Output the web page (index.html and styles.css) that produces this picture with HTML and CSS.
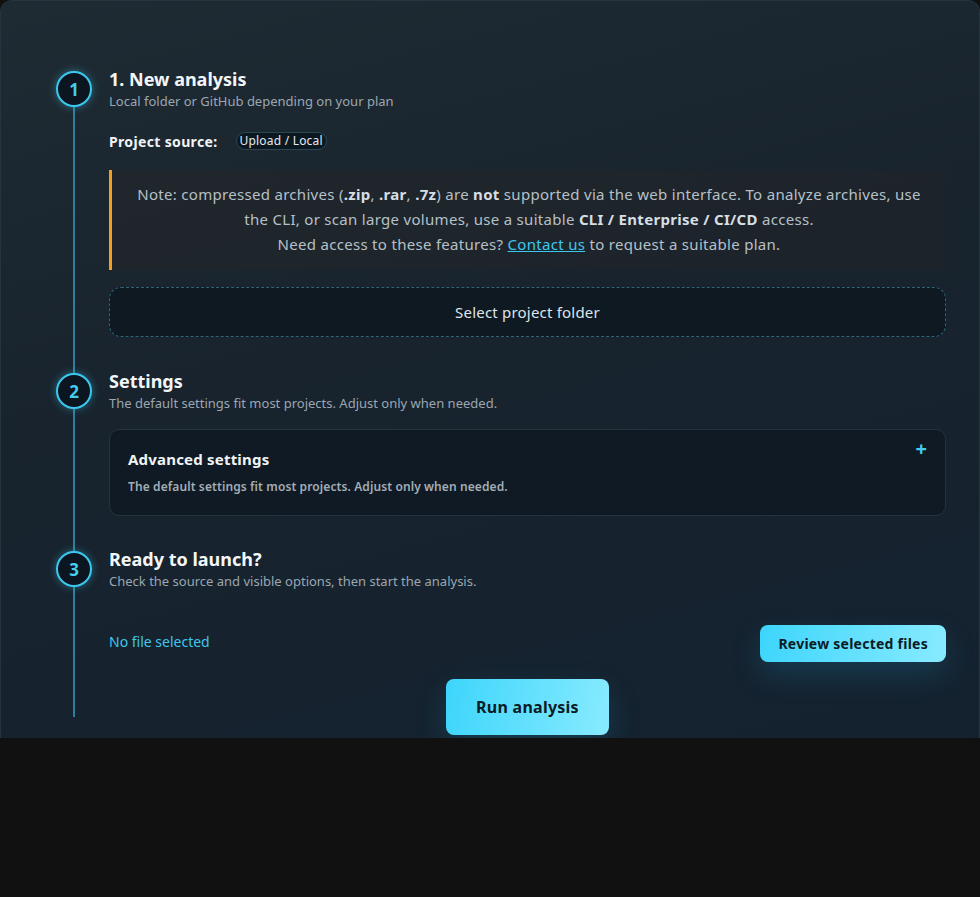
FILE: index.html
```html
<!DOCTYPE html>
<html lang="en">
<head>
<meta charset="utf-8">
<title>New analysis</title>
<link rel="stylesheet" href="styles.css">
</head>
<body>
<main class="panel">
  <ol class="steps">
    <li class="step">
      <span class="step-num">1</span>
      <div class="step-body">
        <h2 class="step-title">1. New analysis</h2>
        <p class="step-sub">Local folder or GitHub depending on your plan</p>

        <div class="source-row">
          <span class="source-label">Project source:</span>
          <span class="pill">Upload / Local</span>
        </div>

        <div class="note">
          Note: compressed archives (<b>.zip</b>, <b>.rar</b>, <b>.7z</b>) are <b>not</b> supported via the web interface. To analyze archives, use the CLI, or scan large volumes, use a suitable <b>CLI / Enterprise / CI/CD</b> access.<br>
          Need access to these features? <a href="#" class="link">Contact us</a> to request a suitable plan.
        </div>

        <button class="dropzone" type="button">Select project folder</button>
      </div>
    </li>

    <li class="step step-settings">
      <span class="step-num">2</span>
      <div class="step-body">
        <h2 class="step-title">Settings</h2>
        <p class="step-sub">The default settings fit most projects. Adjust only when needed.</p>

        <section class="advanced">
          <h3 class="advanced-title">Advanced settings</h3>
          <p class="advanced-desc">The default settings fit most projects. Adjust only when needed.</p>
          <span class="advanced-toggle">+</span>
        </section>
      </div>
    </li>

    <li class="step step-launch">
      <span class="step-num">3</span>
      <div class="step-body">
        <h2 class="step-title">Ready to launch?</h2>
        <p class="step-sub">Check the source and visible options, then start the analysis.</p>

        <div class="file-row">
          <span class="file-status">No file selected</span>
          <button class="btn btn-small" type="button">Review selected files</button>
        </div>

        <div class="run-row">
          <button class="btn btn-run" type="button">Run analysis</button>
        </div>
      </div>
    </li>
  </ol>
</main>
</body>
</html>
```

FILE: styles.css
```css
* {
  box-sizing: border-box;
}

html,
body {
  margin: 0;
  padding: 0;
  background: #111111;
}

body {
  font-family: "Noto Sans", "Open Sans", sans-serif;
  color: #e8edf1;
}

.panel {
  border: 1px solid #25343d;
  border-bottom: none;
  border-radius: 12px 12px 0 0;
  background: linear-gradient(165deg, #1f2b33 0%, #18232d 45%, #142230 100%);
  padding: 0 33px 3px 55px;
}

.steps {
  list-style: none;
  margin: 0;
  padding: 66px 0 0;
  position: relative;
}

/* vertical rail joining the step markers */
.steps::before {
  content: "";
  position: absolute;
  left: 17px;
  top: 88px;
  bottom: 18px;
  width: 2px;
  background: #2b7f9b;
}

.step {
  display: grid;
  grid-template-columns: 36px 1fr;
  column-gap: 17px;
  position: relative;
}

.step-num {
  width: 36px;
  height: 36px;
  margin-top: 4px;
  border-radius: 50%;
  border: 2px solid #3cc8ee;
  background: #0b1620;
  box-shadow: 0 0 8px rgba(60, 200, 238, 0.45);
  color: #45cdf0;
  font-weight: 700;
  font-size: 17px;
  display: flex;
  align-items: center;
  justify-content: center;
  position: relative;
  z-index: 1;
}

.step-title {
  margin: 0;
  font-size: 18px;
  line-height: 24px;
  font-weight: 700;
  color: #f3f6f8;
}

.step-sub {
  margin: 1px 0 0;
  font-size: 13px;
  line-height: 18px;
  color: #9ba7b1;
}

.source-row {
  display: flex;
  align-items: center;
  gap: 18px;
  margin-top: 22px;
  height: 18px;
}

.source-label {
  font-size: 14px;
  font-weight: 700;
  letter-spacing: 0.35px;
  color: #f1f4f6;
}

.pill {
  font-size: 12px;
  line-height: 16px;
  padding: 0 3px;
  letter-spacing: 0.2px;
  border: 1px solid #2a4652;
  border-radius: 9px;
  background: #0c1821;
  color: #e3e9ee;
}

.note {
  margin-top: 20px;
  padding: 12px 24px 13px;
  border-left: 3px solid #f0a21f;
  background: rgba(40, 38, 36, 0.35);
  font-size: 15px;
  line-height: 25px;
  letter-spacing: 0.3px;
  text-align: center;
  color: #b6c0c8;
}

.note b {
  color: #d7dee4;
}

.link {
  color: #3cc9ee;
  text-decoration: underline;
}

.dropzone {
  display: block;
  width: 100%;
  height: 50px;
  margin-top: 17px;
  border: 1.5px dashed #2f6479;
  border-radius: 12px;
  background: #0e1922;
  font: inherit;
  font-size: 15px;
  letter-spacing: 0.2px;
  color: #dfe5ea;
}

.step-settings {
  margin-top: 32px;
}

.advanced {
  position: relative;
  margin-top: 17px;
  padding: 19px 18px 19px;
  border: 1px solid #27333c;
  border-radius: 10px;
  background: #0f1a24;
}

.advanced-title {
  margin: 0;
  font-size: 15px;
  line-height: 20px;
  font-weight: 700;
  letter-spacing: 0.2px;
  color: #f1f4f6;
}

.advanced-desc {
  margin: 9px 0 0;
  font-size: 12px;
  line-height: 18px;
  font-weight: 600;
  letter-spacing: 0.1px;
  color: #a3adb6;
}

.advanced-toggle {
  position: absolute;
  top: 7px;
  right: 18px;
  font-size: 20px;
  font-weight: 700;
  line-height: 24px;
  color: #45cdf0;
}

.step-launch {
  margin-top: 31px;
}

.file-row {
  display: flex;
  align-items: center;
  justify-content: space-between;
  margin-top: 35px;
}

.file-status {
  padding-bottom: 5px;
  font-size: 14px;
  color: #3fc6ea;
}

.btn {
  border: none;
  border-radius: 8px;
  background: linear-gradient(100deg, #3dd5fb 0%, #88ebff 100%);
  font: inherit;
  font-weight: 700;
  letter-spacing: 0.25px;
  color: #0d1b25;
  box-shadow: 0 12px 30px rgba(30, 150, 200, 0.22);
}

.btn-small {
  height: 37px;
  padding: 0 18px;
  font-size: 14px;
}

.run-row {
  display: flex;
  justify-content: center;
  margin-top: 17px;
}

.btn-run {
  width: 163px;
  height: 56px;
  font-size: 16px;
}
```
